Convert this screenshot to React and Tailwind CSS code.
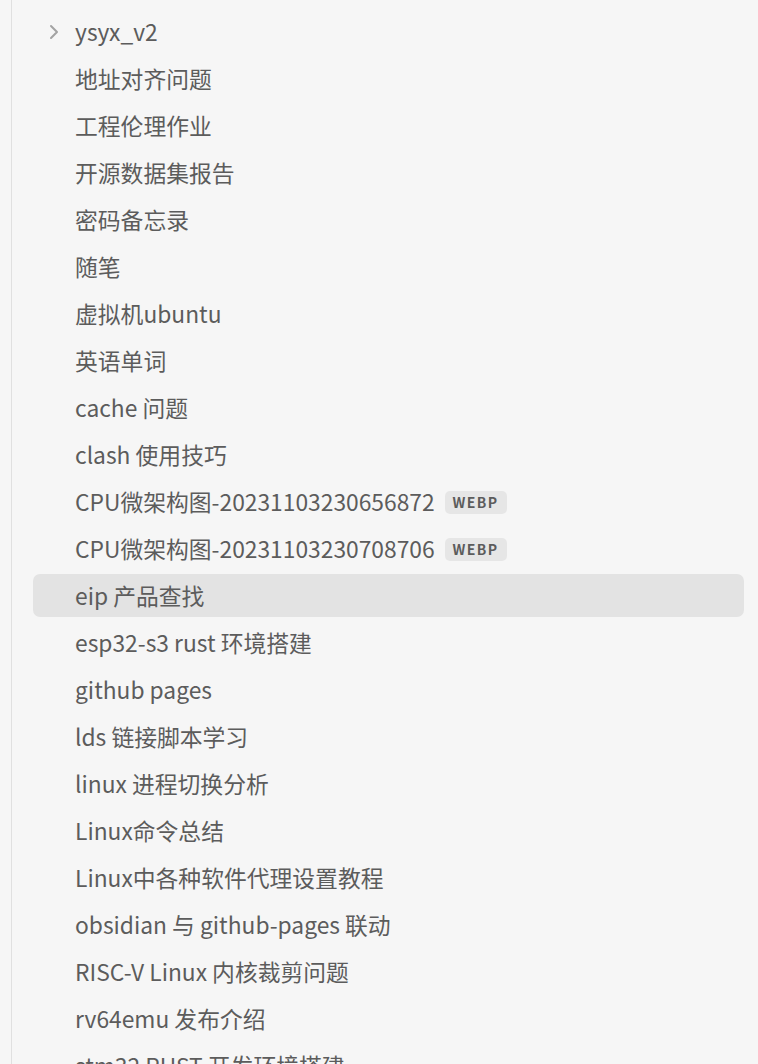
const items = [
  { name: "ysyx_v2", folder: true },
  { name: "地址对齐问题" },
  { name: "工程伦理作业" },
  { name: "开源数据集报告" },
  { name: "密码备忘录" },
  { name: "随笔" },
  { name: "虚拟机ubuntu" },
  { name: "英语单词" },
  { name: "cache 问题" },
  { name: "clash 使用技巧" },
  { name: "CPU微架构图-20231103230656872", ext: "WEBP" },
  { name: "CPU微架构图-20231103230708706", ext: "WEBP" },
  { name: "eip 产品查找", active: true },
  { name: "esp32-s3 rust 环境搭建" },
  { name: "github pages" },
  { name: "lds 链接脚本学习" },
  { name: "linux 进程切换分析" },
  { name: "Linux命令总结" },
  { name: "Linux中各种软件代理设置教程" },
  { name: "obsidian 与 github-pages 联动" },
  { name: "RISC-V Linux 内核裁剪问题" },
  { name: "rv64emu 发布介绍" },
  { name: "stm32 RUST 开发环境搭建" },
]

function Chevron() {
  return (
    <svg width="14" height="18" viewBox="0 0 14 18" fill="none" stroke="#a3a3a3" strokeWidth="2" strokeLinecap="round" strokeLinejoin="round">
      <path d="M4 3l6 6-6 6" />
    </svg>
  )
}

export default function App() {
  return (
    <div className="h-[1064px] w-[758px] overflow-hidden bg-[#f6f6f6] font-['Noto_Sans_CJK_SC','Noto_Sans',sans-serif]">
      <div className="ml-[11px] h-full border-l-[1.5px] border-[#e0e0e0] pt-[10px] pr-[14px] pl-[21px]">
        {items.map((item, i) => (
          <div
            key={i}
            className={`relative mb-[4px] flex h-[43px] items-center rounded-[7px] pl-[42px] pt-[1px] text-[22.8px] text-[#5c5c5c] ${item.active ? 'bg-[#e3e3e3]' : ''}`}
          >
            {item.folder && (
              <span className="absolute left-[14px] top-[13px]">
                <Chevron />
              </span>
            )}
            <span className="whitespace-nowrap">{item.name}</span>
            {item.ext && (
              <span className="ml-[10px] rounded-[5px] bg-[#e6e6e6] px-[8px] py-[1px] text-[14px] font-bold tracking-[1.4px] text-[#5c5c5c] leading-[21px]">
                {item.ext}
              </span>
            )}
          </div>
        ))}
      </div>
    </div>
  )
}
